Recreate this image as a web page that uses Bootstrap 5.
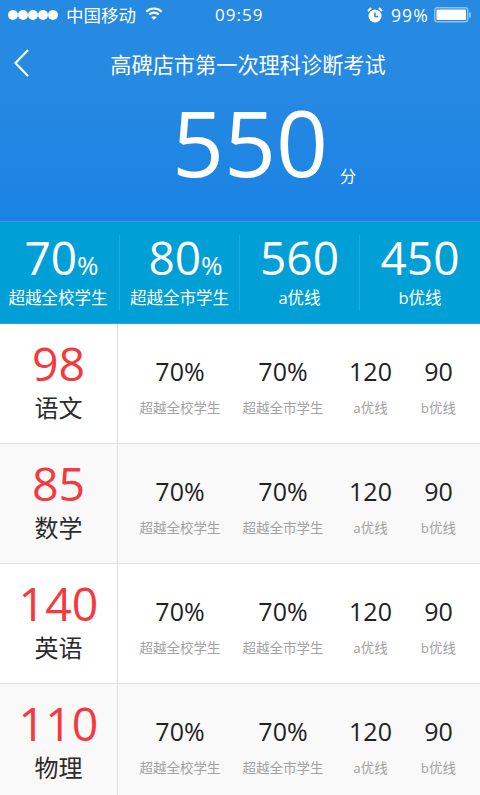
<!doctype html>
<html lang="zh"><head><meta charset="utf-8">
<link href="https://cdn.jsdelivr.net/npm/bootstrap@5.3.0/dist/css/bootstrap.min.css" rel="stylesheet">
<style>
body{width:480px;height:795px;overflow:hidden;font-family:"Open Sans","Noto Sans CJK SC",sans-serif;background:#fff}
.hero{height:221px;background:linear-gradient(#2689e2 0,#2689e2 90px,#1a83e4 100%);color:#fff;position:relative}
.statusbar{height:30px;padding:0 8px 0 8px;font-size:17.5px;line-height:30px;position:relative}
.statusbar .clock{position:absolute;left:215px;top:0;font-size:17px;letter-spacing:1px}
.dots{gap:0;margin-right:8px}.dots i{display:block;width:10px;height:10px;border-radius:50%;background:#fff}
.wifi{margin-left:9px;margin-top:-4px}
.pct{font-size:17.5px;letter-spacing:1.2px;margin-left:8px;margin-right:5px}
.titlebar{height:63px;position:relative;padding:18px 0 0 12px}
.titlebar .ttl{position:absolute;left:-1px;right:-17px;top:20px;text-align:center;line-height:30px;font-size:21.2px}
.backico{display:block;margin-left:1px}
.scorenum{font-size:91px;font-weight:400;line-height:120px;display:block;margin-top:-11px;text-align:center;padding-left:20px}
.fen{font-size:16px;position:absolute;left:340px;top:166px;line-height:20px}
.band{height:103px;background:#00a0d7;border-top:1px solid #3a96ec;border-bottom:1px solid #2aa8e4;color:#fff;padding-top:13px}
.bandcol{height:76px;border-right:1px solid #1fa9e0;text-align:center}
.bandcol:last-child{border-right:0}
.bandcol.firstcol{padding-right:3px}
.bnum{font-size:46px;font-weight:400;line-height:44px;height:44px;white-space:nowrap}
.bnum small{font-size:26px;font-weight:400}
.shift-a{padding-left:7px}
.shift-b{padding-left:12px}
.blab{font-size:16.5px;line-height:24px;white-space:nowrap;margin-top:7px}
.srow{height:120px;border-bottom:1px solid #e0e0e0}
.srow.alt{background:#f9f9f9}
.subj{width:118px;flex:none;border-right:1px solid #dcdcdc;text-align:center;padding-top:11px}
.snum{font-size:46.5px;font-weight:400;line-height:56px;color:#f4393f}
.sname{font-size:24px;line-height:32px;color:#2b2b2b;margin-top:1px}
.metrics{flex:1;display:grid;grid-template-columns:124px 82px 93px 43px;padding-top:31px;text-align:center}
.mnum{font-size:25px;line-height:32px;color:#222;font-weight:400}
.mlab{font-size:13.5px;line-height:20px;color:#a2a2a2;margin-top:11px;white-space:nowrap}
</style></head><body>
<div class="hero">
  <div class="statusbar d-flex align-items-center">
    <div class="dots d-flex"><i></i><i></i><i></i><i></i><i></i></div>
    <span>中国移动</span>
    <svg class="wifi" width="18" height="14" viewBox="0 0 20 16" fill="none" stroke="#fff" stroke-width="2.4"><path d="M1.2 6.5a12.5 12.5 0 0 1 17.6 0M4.5 9.8a8 8 0 0 1 11 0"/><path d="M7 13.2a4.4 4.4 0 0 1 6 0L10 15.6Z" fill="#fff" stroke="none"/></svg>
    <span class="clock">09:59</span>
    <div class="ms-auto d-flex align-items-center">
      <svg width="16" height="16" viewBox="0 0 16 16"><circle cx="8" cy="9" r="6.5" fill="#fff"/><path d="M8 5.5V9.5H11" stroke="#2689e2" stroke-width="1.5" fill="none"/><path d="M1 4l3-3M15 4l-3-3" stroke="#fff" stroke-width="2"/></svg>
      <span class="pct">99%</span>
      <svg width="38" height="16" viewBox="0 0 38 16"><rect x=".75" y=".75" width="33" height="14" rx="2.5" fill="none" stroke="#8dc0ef" stroke-width="1.5"/><rect x="2.5" y="2.5" width="29.5" height="10.5" rx="1" fill="#fff"/><rect x="35" y="5.5" width="2" height="5" fill="#8dc0ef"/></svg>
    </div>
  </div>
  <div class="titlebar">
    <svg class="backico" width="20" height="30" viewBox="0 0 20 30" fill="none" stroke="#fff" stroke-width="2.2"><path d="M15 2 2.5 15 15 28"/></svg>
    <div class="ttl">高碑店市第一次理科诊断考试</div>
  </div>
  <span class="scorenum">550</span>
  <span class="fen">分</span>
</div>
<div class="band"><div class="row g-0">
  <div class="col-3 bandcol firstcol"><div class="bnum shift-a">70<small>%</small></div><div class="blab">超越全校学生</div></div>
  <div class="col-3 bandcol"><div class="bnum shift-b">80<small>%</small></div><div class="blab">超越全市学生</div></div>
  <div class="col-3 bandcol"><div class="bnum">560</div><div class="blab">a优线</div></div>
  <div class="col-3 bandcol"><div class="bnum">450</div><div class="blab">b优线</div></div>
</div></div>
<div class="srow d-flex"><div class="subj"><div class="snum">98</div><div class="sname">语文</div></div><div class="metrics"><div><div class="mnum">70%</div><div class="mlab">超越全校学生</div></div><div><div class="mnum">70%</div><div class="mlab">超越全市学生</div></div><div><div class="mnum">120</div><div class="mlab">a优线</div></div><div><div class="mnum">90</div><div class="mlab">b优线</div></div></div></div>
<div class="srow alt d-flex"><div class="subj"><div class="snum">85</div><div class="sname">数学</div></div><div class="metrics"><div><div class="mnum">70%</div><div class="mlab">超越全校学生</div></div><div><div class="mnum">70%</div><div class="mlab">超越全市学生</div></div><div><div class="mnum">120</div><div class="mlab">a优线</div></div><div><div class="mnum">90</div><div class="mlab">b优线</div></div></div></div>
<div class="srow d-flex"><div class="subj"><div class="snum">140</div><div class="sname">英语</div></div><div class="metrics"><div><div class="mnum">70%</div><div class="mlab">超越全校学生</div></div><div><div class="mnum">70%</div><div class="mlab">超越全市学生</div></div><div><div class="mnum">120</div><div class="mlab">a优线</div></div><div><div class="mnum">90</div><div class="mlab">b优线</div></div></div></div>
<div class="srow alt d-flex"><div class="subj"><div class="snum">110</div><div class="sname">物理</div></div><div class="metrics"><div><div class="mnum">70%</div><div class="mlab">超越全校学生</div></div><div><div class="mnum">70%</div><div class="mlab">超越全市学生</div></div><div><div class="mnum">120</div><div class="mlab">a优线</div></div><div><div class="mnum">90</div><div class="mlab">b优线</div></div></div></div>
<script src="https://cdn.jsdelivr.net/npm/bootstrap@5.3.0/dist/js/bootstrap.bundle.min.js"></script>
</body></html>
